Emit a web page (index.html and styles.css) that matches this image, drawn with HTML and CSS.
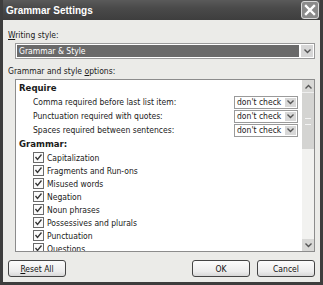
FILE: index.html
```html
<!DOCTYPE html>
<html lang="en">
  <head>
    <meta charset="UTF-8" />
    <title>Grammar Settings</title>
    <link rel="stylesheet" href="styles.css">
  </head>
  <body>
    <div class="window">
      <div class="titlebar">
        <span class="title">Grammar Settings</span>
        <button class="close" type="button">
          <svg width="12" height="12" viewBox="0 0 12 12">
            <path d="M2 2 L10 10 M10 2 L2 10" stroke="#fff" stroke-width="2.4" stroke-linecap="square" />
          </svg>
        </button>
      </div>
      <div class="body">
        <div class="label"><u>W</u>riting style:</div>
        <div class="combo">
          <div class="combo-value">Grammar &amp; Style</div>
          <div class="arrow">
            <svg width="7" height="5" viewBox="0 0 7 5"><path d="M0.5 0.5 L3.5 3.5 L6.5 0.5" fill="none" stroke="#555" stroke-width="1.4" /></svg>
          </div>
        </div>
        <div class="label options-label">Grammar and style <u>o</u>ptions:</div>
        <div class="listbox">
          <div class="list">
            <div class="group">Require</div>
            <div class="req-row">
              <span>Comma required before last list item:</span>
              <div class="mini-combo"><span>don't check</span><div class="mini-arrow"><svg width="7" height="5" viewBox="0 0 7 5"><path d="M0.5 0.5 L3.5 3.5 L6.5 0.5" fill="none" stroke="#555" stroke-width="1.4" /></svg></div></div>
            </div>
            <div class="req-row">
              <span>Punctuation required with quotes:</span>
              <div class="mini-combo"><span>don't check</span><div class="mini-arrow"><svg width="7" height="5" viewBox="0 0 7 5"><path d="M0.5 0.5 L3.5 3.5 L6.5 0.5" fill="none" stroke="#555" stroke-width="1.4" /></svg></div></div>
            </div>
            <div class="req-row">
              <span>Spaces required between sentences:</span>
              <div class="mini-combo"><span>don't check</span><div class="mini-arrow"><svg width="7" height="5" viewBox="0 0 7 5"><path d="M0.5 0.5 L3.5 3.5 L6.5 0.5" fill="none" stroke="#555" stroke-width="1.4" /></svg></div></div>
            </div>
            <div class="group">Grammar:</div>
            <div class="check-row"><span class="box"></span>Capitalization</div>
            <div class="check-row"><span class="box"></span>Fragments and Run-ons</div>
            <div class="check-row"><span class="box"></span>Misused words</div>
            <div class="check-row"><span class="box"></span>Negation</div>
            <div class="check-row"><span class="box"></span>Noun phrases</div>
            <div class="check-row"><span class="box"></span>Possessives and plurals</div>
            <div class="check-row"><span class="box"></span>Punctuation</div>
            <div class="check-row"><span class="box"></span>Questions</div>
          </div>
          <div class="scrollbar">
            <div class="sb-btn"><svg width="7" height="5" viewBox="0 0 7 5"><path d="M0.5 4.5 L3.5 1.5 L6.5 4.5" fill="none" stroke="#555" stroke-width="1.4" /></svg></div>
            <div class="thumb"><span class="grip"></span></div>
            <div class="track"></div>
            <div class="sb-btn"><svg width="7" height="5" viewBox="0 0 7 5"><path d="M0.5 0.5 L3.5 3.5 L6.5 0.5" fill="none" stroke="#555" stroke-width="1.4" /></svg></div>
          </div>
        </div>
        <div class="buttons">
          <button class="btn" type="button"><u>R</u>eset All</button>
          <div class="right-buttons">
            <button class="btn" type="button">OK</button>
            <button class="btn" type="button">Cancel</button>
          </div>
        </div>
      </div>
    </div>
  </body>
</html>
```

FILE: styles.css
```css
body {
  margin: 0;
  background: #2e2e2e;
  font-family: "DejaVu Sans Condensed", "Liberation Sans", Arial, sans-serif;
  font-size: 8.5px;
  color: #1a1a1a;
}

.window {
  width: 323px;
  height: 285px;
  box-sizing: border-box;
  padding: 0 3px 3px 3px;
  background: #3d3d3d;
  display: flex;
  flex-direction: column;
}

.titlebar {
  height: 25px;
  display: flex;
  align-items: center;
  justify-content: space-between;
  background: linear-gradient(#5a5a5a, #4a4a4a 40%, #3e3e3e);
  padding: 0 1px 0 3px;
}

.title {
  color: #fff;
  font-family: "Liberation Sans", Arial, sans-serif;
  font-weight: bold;
  font-size: 10px;
}

.close {
  width: 18px;
  height: 18px;
  padding: 0;
  border: 1px solid #d8d8d8;
  border-radius: 3px;
  background: #8a8a8a;
  display: flex;
  align-items: center;
  justify-content: center;
}

.body {
  flex: 1;
  background: #ebebe8;
  padding: 9px 5px 5px 5px;
  display: flex;
  flex-direction: column;
}

.label {
  height: 12px;
  line-height: 12px;
  margin-bottom: 2px;
}

.combo {
  margin-left: 7px;
  height: 16px;
  box-sizing: border-box;
  border: 1px solid #9a9a9a;
  background: #fff;
  display: flex;
  padding: 1px;
}

.combo-value {
  flex: 1;
  background: #6a6a6a;
  color: #fff;
  line-height: 12px;
  padding-left: 2px;
  margin-right: 2px;
}

.arrow {
  width: 12px;
  background: #d6d6d6;
  display: flex;
  align-items: center;
  justify-content: center;
}

.options-label {
  margin-top: 6px;
  margin-bottom: 2px;
}

.listbox {
  margin-left: 7px;
  height: 173px;
  box-sizing: border-box;
  border: 1px solid #8c8c8c;
  background: #fff;
  display: flex;
  overflow: hidden;
}

.list {
  flex: 1;
  padding: 1px 0 0 3px;
}

.group {
  font-weight: bold;
  font-size: 9.5px;
  height: 14px;
  line-height: 14px;
}

.req-row {
  display: flex;
  align-items: center;
  justify-content: space-between;
  height: 14px;
  padding-left: 14px;
  padding-right: 4px;
}

.mini-combo {
  width: 64px;
  height: 13px;
  box-sizing: border-box;
  border: 1px solid #9a9a9a;
  display: flex;
  align-items: center;
  padding-left: 2px;
}

.mini-combo span {
  flex: 1;
}

.mini-arrow {
  width: 11px;
  height: 9px;
  margin-right: 1px;
  background: #d8d8d8;
  display: flex;
  align-items: center;
  justify-content: center;
}

.check-row {
  display: flex;
  align-items: center;
  height: 13px;
  padding-left: 14px;
}

.box {
  width: 9px;
  height: 9px;
  border: 1px solid #6a6a6a;
  margin-right: 3px;
  background: #fafafa url("data:image/svg+xml,%3Csvg xmlns='http://www.w3.org/2000/svg' width='9' height='9'%3E%3Cpath d='M1.5 4 L3.5 6.5 L7.5 1.5' fill='none' stroke='%23333' stroke-width='1.3'/%3E%3C/svg%3E") no-repeat center;
}

.scrollbar {
  width: 12px;
  display: flex;
  flex-direction: column;
  background: #f2f2f0;
}

.sb-btn {
  height: 12px;
  background: #d8d8d6;
  display: flex;
  align-items: center;
  justify-content: center;
}

.thumb {
  height: 56px;
  background: #d4d4d2;
  border-top: 1px solid #eee;
  display: flex;
  align-items: center;
  justify-content: center;
}

.grip {
  width: 6px;
  height: 5px;
  border-top: 1px solid #f4f4f4;
  border-bottom: 1px solid #f4f4f4;
}

.track {
  flex: 1;
}

.buttons {
  margin-top: 8px;
  display: flex;
  justify-content: space-between;
}

.right-buttons {
  display: flex;
  gap: 7px;
}

.btn {
  font-family: inherit;
  font-size: 8.5px;
  color: #111;
  width: 58px;
  height: 17px;
  padding: 0;
  border: 1px solid #444;
  border-radius: 3px;
  background: linear-gradient(#fcfcfc, #ececec 70%, #d8d8d8);
}
```
